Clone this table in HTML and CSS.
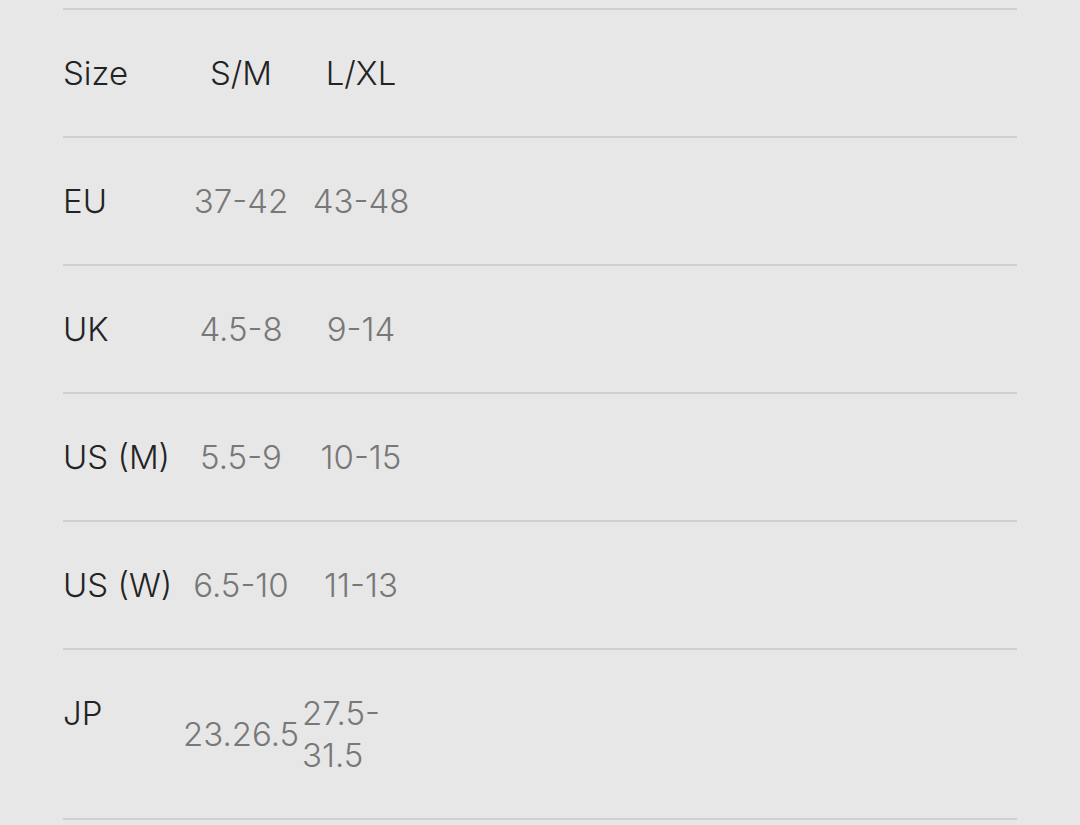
FILE: index.html
```html
<!DOCTYPE html>
<html lang="en">
<head>
<meta charset="utf-8">
<title>Size chart</title>
<link rel="stylesheet" href="styles.css">
</head>
<body>
<div class="chart">
  <div class="row">
    <div class="label">Size</div>
    <div class="head">S/M</div>
    <div class="head">L/XL</div>
  </div>
  <div class="row">
    <div class="label">EU</div>
    <div class="val">37-42</div>
    <div class="val">43-48</div>
  </div>
  <div class="row">
    <div class="label">UK</div>
    <div class="val">4.5-8</div>
    <div class="val">9-14</div>
  </div>
  <div class="row">
    <div class="label">US (M)</div>
    <div class="val">5.5-9</div>
    <div class="val">10-15</div>
  </div>
  <div class="row">
    <div class="label">US (W)</div>
    <div class="val">6.5-10</div>
    <div class="val">11-13</div>
  </div>
  <div class="row row-last">
    <div class="label label-top">JP</div>
    <div class="val">23.26.5</div>
    <div class="val val-wrap">27.5-<br>31.5</div>
  </div>
</div>
</body>
</html>
```

FILE: styles.css
```css
html, body {
  margin: 0;
  padding: 0;
  background: #e7e7e7;
}

body {
  font-family: Inter, "Liberation Sans", sans-serif;
  font-size: 33px;
  font-weight: 350;
  line-height: 42px;
  letter-spacing: 0;
}

.chart {
  padding: 8px 63px 0 63px;
}

.row {
  display: grid;
  grid-template-columns: 118px 120px 120px;
  align-items: center;
  border-top: 2px solid #d0d0d0;
  padding: 42px 0;
}

.row-last {
  border-bottom: 2px solid #d0d0d0;
}

.label {
  color: #232323;
  white-space: nowrap;
}

.label-top {
  align-self: start;
}

.head {
  color: #232323;
  text-align: center;
  white-space: nowrap;
}

.val {
  color: #787878;
  text-align: center;
  white-space: nowrap;
}

.val-wrap {
  text-align: left;
  padding-left: 1px;
}
```
